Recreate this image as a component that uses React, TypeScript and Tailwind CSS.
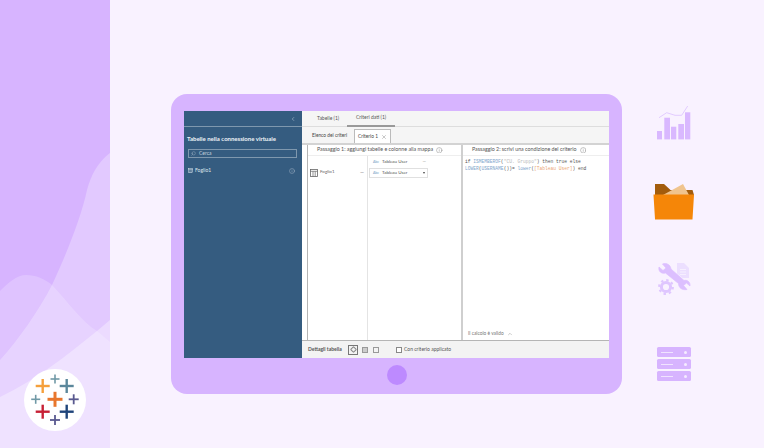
import { ChevronLeft, ChevronUp, Info, Search, X } from "lucide-react";

const font = "font-['Lato','Open_Sans',sans-serif]";

function Cross({ x, y, s, c, t = 3 }: { x: number; y: number; s: number; c: string; t?: number }) {
  return (
    <g stroke={c} strokeWidth={t}>
      <line x1={x - s / 2} y1={y} x2={x + s / 2} y2={y} />
      <line x1={x} y1={y - s / 2} x2={x} y2={y + s / 2} />
    </g>
  );
}

function Logo() {
  return (
    <svg viewBox="0 0 62 62" className="absolute left-[24px] top-[369px] w-[62px] h-[62px]">
      <circle cx="31" cy="31" r="31" fill="#ffffff" />
      <Cross x={31} y={30.3} s={15} c="#e8762d" />
      <Cross x={18.7} y={17} s={14} c="#f5a03c" t={2.4} />
      <Cross x={31} y={10} s={9} c="#7099a6" t={1.6} />
      <Cross x={42.7} y={17} s={14} c="#5b879b" t={2.4} />
      <Cross x={11.7} y={30.3} s={9} c="#7099a6" t={1.6} />
      <Cross x={49.7} y={30.3} s={10} c="#59598f" t={1.8} />
      <Cross x={18.7} y={42.7} s={14} c="#c72035" t={2.4} />
      <Cross x={42.7} y={42.7} s={14} c="#1f447a" t={2.4} />
      <Cross x={31} y={51} s={10} c="#59598f" t={1.8} />
    </svg>
  );
}

function Waves() {
  return (
    <svg viewBox="0 0 110 448" className="absolute inset-0 w-[110px] h-[448px]">
      <path d="M110 153C98 162 91 175 87 190C81 218 66 255 52 285C38 312 18 340 0 360V448H110Z" fill="#ffffff" fillOpacity="0.28" />
      <path d="M0 291C9 282 17 275 26 275C36 275 45 279 52 285C68 302 82 322 97 331L110 342V448H0Z" fill="#ffffff" fillOpacity="0.2" />
      <path d="M0 397C36 380 66 356 97 331L110 320V448H0Z" fill="#ffffff" fillOpacity="0.34" />
    </svg>
  );
}

function TableIcon({ size, color }: { size: number; color: string }) {
  return (
    <svg viewBox="0 0 8 8" style={{ width: size, height: size }}>
      <rect x="0.5" y="0.5" width="7" height="7" fill="none" stroke={color} strokeWidth="0.8" />
      <path d="M0.5 2.3H7.5M3 2.3V7.5M5.2 2.3V7.5" stroke={color} strokeWidth="0.7" />
    </svg>
  );
}

function BarsIcon() {
  return (
    <svg viewBox="0 0 36 36" className="w-[36px] h-[36px]">
      <g fill="#d9b8ff">
        <rect x="1" y="25" width="5" height="8.4" />
        <rect x="8.3" y="11.7" width="5.7" height="21.7" />
        <rect x="15" y="20.7" width="5.3" height="12.7" />
        <rect x="22.3" y="18" width="5.7" height="15.4" />
        <rect x="29" y="6.3" width="5.3" height="27.1" />
      </g>
      <polyline points="3,11.7 10.7,6.7 19,9.3 25.7,9.3 31.7,0" fill="none" stroke="#dcc2ff" strokeWidth="0.8" />
    </svg>
  );
}

function FolderIcon() {
  return (
    <svg viewBox="0 0 42 37" className="w-[42px] h-[37px]">
      <path d="M2 0H11L17.5 6H39.5L41 11H2Z" fill="#a35c0c" />
      <path d="M10 11L30 0L36 11Z" fill="#f0c48e" />
      <path d="M0.5 10.5H41L39.5 35.5H2Z" fill="#f58608" />
    </svg>
  );
}

function ToolsIcon() {
  return (
    <svg viewBox="0 0 34 36" className="w-[34px] h-[36px]">
      <path d="M20 0H27L32 5V15H25.5L20 10.5Z" fill="#ecdfff" />
      <path d="M23 6.5H29M23 9H29M23 11.5H29" stroke="#f9f2ff" strokeWidth="0.8" />
      <path d="M2 4L6 7.5L9 5L5.5 1C10 -0.5 13.5 2 14 6L27 17.5C30 16.5 33.5 19 33 23L29.5 20L26.5 22.5L30 26.5C25.5 27.5 21.5 25 21.5 20.5L8.5 10C4.5 11 1 8.5 2 4Z" fill="#dcbfff" stroke="#dcbfff" strokeWidth="0.7" />
      <circle cx="9" cy="24" r="4.6" fill="none" stroke="#dfc6ff" strokeWidth="3" />
      <circle cx="9" cy="24" r="6.8" fill="none" stroke="#dfc6ff" strokeWidth="2.2" strokeDasharray="2.4 2.94" />
    </svg>
  );
}

function ServerRow() {
  return (
    <div className="w-[34px] h-[10px] rounded-[1.5px] bg-[#d7b4ff] flex items-center justify-between pl-[4px] pr-[4px]">
      <div className="w-[12px] h-px bg-[#f0e3ff]" />
      <div className="w-[3px] h-[3px] rounded-full bg-[#f5ecff]" />
    </div>
  );
}

function Tag() {
  return <span className="text-[#6d9dc5] text-[3.5px] w-[9px] inline-block">Abc</span>;
}

function Sidebar() {
  return (
    <div className="w-[118px] h-full bg-[#355c80] flex flex-col text-white">
      <div className="h-[16px] border-b border-[#7f98ae] flex items-center justify-end pr-[6px]">
        <ChevronLeft size={6} strokeWidth={2} className="text-[#c4d2de]" />
      </div>
      <div className="px-[3px] pt-[8px]">
        <div className="text-[6px] font-bold leading-[8px] text-[#eef3f7] whitespace-nowrap">Tabelle nella connessione virtuale</div>
        <div className="mt-[6px] ml-px w-[109px] h-[9px] border border-[#7f98ae] flex items-center pl-[2px] gap-[3px] text-[5px] text-[#c4d2de]">
          <Search size={5} strokeWidth={1.5} className="-scale-x-100" />
          Cerca
        </div>
        <div className="mt-[8px] pl-px pr-[4px] h-[9px] flex items-center justify-between text-[5px] text-[#dfe7ee]">
          <div className="flex items-center gap-[2px]">
            <TableIcon size={5} color="#dfe7ee" />
            Foglio1
          </div>
          <Info size={6} strokeWidth={1.2} />
        </div>
      </div>
    </div>
  );
}

function LeftPanel() {
  return (
    <div className="w-[154px] h-full border-l border-[#b5b5b5] flex flex-col bg-white">
      <div className="h-[11px] border-b border-[#eeeeee] pl-[9px] flex items-center gap-[3px] text-[5.3px] text-[#555555] whitespace-nowrap">
        Passaggio 1: aggiungi tabelle e colonne alla mappa
        <Info size={6.5} strokeWidth={1.2} />
      </div>
      <div className="flex-1 flex">
        <div className="w-[60px] border-r border-[#e4e4e4] pl-[2px] pr-[3px] pt-[12px] flex items-start justify-between">
          <div className="flex items-center gap-[2px] text-[4.5px] text-[#666666] h-[9px]">
            <TableIcon size={8} color="#666666" />
            Foglio1
          </div>
          <span className="text-[5px] leading-[9px] text-[#777777]">—</span>
        </div>
        <div className="flex-1 pl-[1px] pt-[2px]">
          <div className="w-[59px] h-[8px] pl-[4px] pr-[2px] flex items-center justify-between text-[4.5px] text-[#555555]">
            <span className="whitespace-nowrap"><Tag />Tableau User</span>
            <span className="text-[#777777]">—</span>
          </div>
          <div className="mt-[2px] w-[59px] h-[10px] border border-[#e0e0e0] pl-[3px] pr-[2px] flex items-center justify-between text-[4.5px] text-[#555555]">
            <span className="whitespace-nowrap"><Tag />Tableau User</span>
            <span className="w-0 h-0 border-x-[1.5px] border-x-transparent border-t-[2px] border-t-[#444444]" />
          </div>
        </div>
      </div>
    </div>
  );
}

function RightPanel() {
  return (
    <div className="flex-1 h-full border-l-2 border-[#cfcfcf] flex flex-col bg-white">
      <div className="h-[11px] border-b border-[#eeeeee] pl-[9px] flex items-center gap-[3px] text-[5.3px] text-[#555555] whitespace-nowrap">
        Passaggio 2: scrivi una condizione del criterio
        <Info size={6.5} strokeWidth={1.2} />
      </div>
      <div className="flex-1 pl-[2px] pt-[3px] font-['Liberation_Mono',monospace] text-[4.6px] leading-[6.7px] text-[#555555] whitespace-pre">
        <div>
          if <span className="text-[#7fa6cc]">ISMEMBEROF</span>(<span className="text-[#b9b9b9]">"CU. Gruppo"</span>) then true else
        </div>
        <div>
          <span className="text-[#7fa6cc]">LOWER</span>(<span className="text-[#7fa6cc]">USERNAME</span>())= <span className="text-[#7fa6cc]">lower</span>(<span className="text-[#eba574]">[Tableau User]</span>) end
        </div>
      </div>
      <div className="h-[12px] pl-[5px] flex items-center gap-[3px] text-[4.8px] text-[#777777]">
        Il calcolo è valido
        <ChevronUp size={6} strokeWidth={1.5} />
      </div>
    </div>
  );
}

function Footer() {
  return (
    <div className="h-[17px] bg-[#f3f3f3] pl-[6px] flex items-center text-[5px] text-[#555555]">
      <span className="font-bold w-[40px] whitespace-nowrap">Dettagli tabella</span>
      <div className="w-[10px] h-[10px] border border-[#777777] flex items-center justify-center">
        <div className="w-[5px] h-[5px] rounded-[1px] border border-[#888888] rotate-45" />
      </div>
      <div className="ml-[4px] w-[6px] h-[6px] border border-[#999999] bg-[#cccccc]" />
      <div className="ml-[5px] w-[6px] h-[6px] border border-[#999999]" />
      <div className="ml-[17px] w-[6px] h-[6px] border border-[#888888] bg-white" />
      <span className="ml-[2px] whitespace-nowrap">Con criterio applicato</span>
    </div>
  );
}

function Workspace() {
  return (
    <div className="flex-1 h-full bg-white flex flex-col min-w-0">
      <div className="h-[16px] bg-[#f5f5f5] border-b border-[#dddddd] flex items-stretch text-[5px] text-[#555555] whitespace-nowrap">
        <div className="pl-[15px] w-[45px] flex items-center">Tabelle (1)</div>
        <div className="w-[48px] border-b-2 border-[#999999] -mb-px flex items-center justify-center">Criteri dati (1)</div>
      </div>
      <div className="h-[16px] bg-[#f5f5f5] flex items-end pl-[5px] text-[4.8px] text-[#444444] whitespace-nowrap">
        <div className="w-[47px] h-[14px] pl-[5px] flex items-center">Elenco dei criteri</div>
        <div className="w-[37px] h-[14px] bg-white border border-b-0 border-[#bbbbbb] pl-[3px] flex items-center gap-[3px]">
          Criterio 1
          <X size={6} strokeWidth={1.3} className="text-[#555555]" />
        </div>
      </div>
      <div className="flex-1 pl-[5px] border-t-2 border-[#d3d3d3] border-b border-b-[#b5b5b5] min-h-0 flex bg-white">
        <LeftPanel />
        <RightPanel />
      </div>
      <Footer />
    </div>
  );
}

export default function App() {
  return (
    <div className={`w-[764px] h-[448px] bg-[#f9f2ff] flex overflow-hidden ${font}`}>
      <div className="relative w-[110px] h-full bg-[#d7b4ff] shrink-0">
        <Waves />
        <Logo />
      </div>
      <div className="pl-[61px] pt-[94px]">
        <div className="w-[451px] h-[300px] bg-[#d7b4ff] rounded-[16px] pl-[13px] pt-[17px] flex flex-col">
          <div className="w-[425px] h-[247px] flex">
            <Sidebar />
            <Workspace />
          </div>
          <div className="w-[425px] flex-1 flex items-center justify-center pb-[2px]">
            <div className="w-[20px] h-[20px] rounded-full bg-[#bd8aff]" />
          </div>
        </div>
      </div>
      <div className="w-[104px] flex flex-col items-center pt-[106px]">
        <BarsIcon />
        <div className="mt-[42px]"><FolderIcon /></div>
        <div className="mt-[42px]"><ToolsIcon /></div>
        <div className="mt-[48px] flex flex-col gap-[2px]">
          <ServerRow />
          <ServerRow />
          <ServerRow />
        </div>
      </div>
    </div>
  );
}
